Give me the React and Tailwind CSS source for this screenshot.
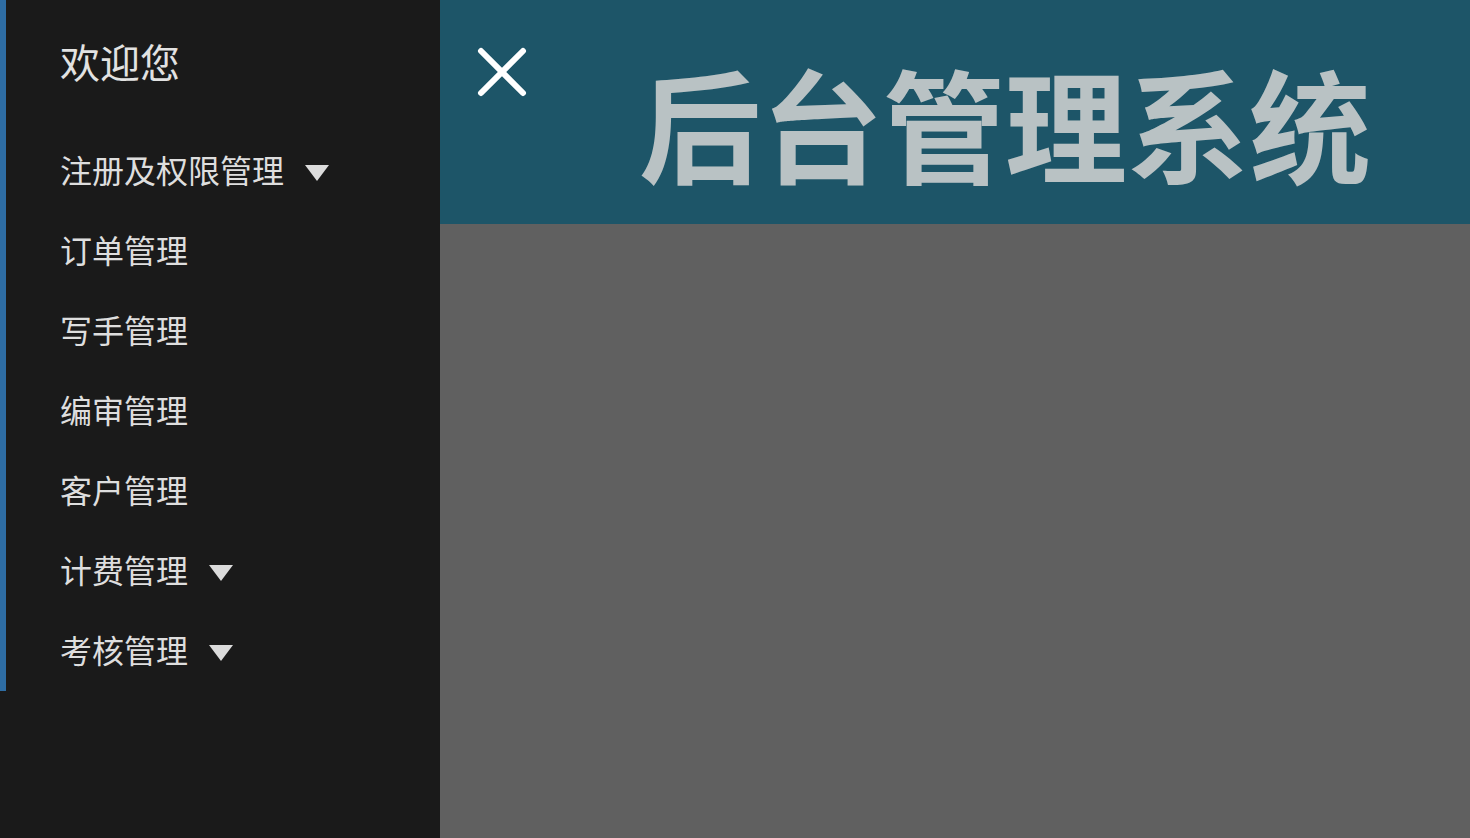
import React from 'react';

const menu = [
  { label: '注册及权限管理', sub: true },
  { label: '订单管理' },
  { label: '写手管理' },
  { label: '编审管理' },
  { label: '客户管理' },
  { label: '计费管理', sub: true },
  { label: '考核管理', sub: true },
];

const Caret = () => (
  <svg width="24" height="16" viewBox="0 0 24 16" className="ml-[21px] mt-[8px] shrink-0">
    <polygon points="0,0 24,0 12,16" fill="#dcdcdc" />
  </svg>
);

const App = () => {
  return (
    <div
      className="flex h-screen w-full overflow-hidden"
      style={{ fontFamily: '"Noto Sans CJK SC", "Noto Sans", sans-serif' }}
    >
      {/* Sidebar */}
      <aside className="w-[440px] shrink-0 bg-[#1a1a1a] h-full">
        <div className="border-l-[6px] border-[#2e6da4] pl-[54px] pt-[31px] pb-[2px]">
          <div className="text-[40px] leading-[60px] text-[#e2e2e2]">欢迎您</div>
          <nav className="mt-[38px]">
            {menu.map((item) => (
              <div key={item.label} className="h-20 flex items-center text-[32px] text-[#dedede]">
                <span>{item.label}</span>
                {item.sub && <Caret />}
              </div>
            ))}
          </nav>
        </div>
      </aside>

      {/* Main */}
      <div className="flex-1 flex flex-col h-full">
        <header className="h-[224px] shrink-0 bg-[#1d5568] flex items-start">
          <button className="ml-[37px] mt-[47px] w-[50px] h-[50px]">
            <svg width="50" height="50" viewBox="0 0 50 50">
              <line x1="4" y1="4" x2="46" y2="46" stroke="#ffffff" strokeWidth="6" strokeLinecap="round" />
              <line x1="46" y1="4" x2="4" y2="46" stroke="#ffffff" strokeWidth="6" strokeLinecap="round" />
            </svg>
          </button>
          <h1 className="ml-[112px] mt-[60px] text-[122px] leading-none font-bold text-[#b9c2c4] whitespace-nowrap">
            后台管理系统
          </h1>
        </header>
        <main className="flex-1 bg-[#606060]"></main>
      </div>
    </div>
  );
};

export default App;
